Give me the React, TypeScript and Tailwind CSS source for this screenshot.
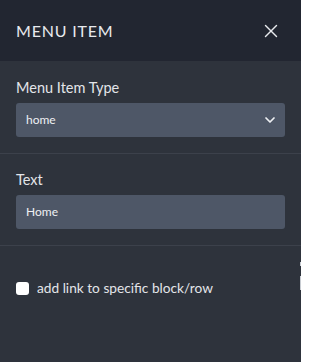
import { X, ChevronDown } from 'lucide-react';

export default function App() {
  return (
    <div className="relative h-[362px] w-[301px] overflow-hidden bg-[#2e333c] font-['Lato',sans-serif] text-[#e5e7eb]">
      <div className="flex h-[61px] items-center justify-between bg-[#222631] pl-4 pr-[19px]">
        <span className="text-[16px] tracking-[0.05em] text-[#e8eaee]">MENU ITEM</span>
        <X size={22} strokeWidth={1.5} className="text-[#e8eaee]" />
      </div>

      <div className="border-b border-[#3c414b] px-4 pb-4 pt-[17px]">
        <label className="block text-[14.5px] leading-5 text-[#e3e5e9]">Menu Item Type</label>
        <div className="mt-[5px] flex h-[34px] items-center justify-between rounded-[3px] bg-[#4e5767] pl-[10px] pr-[7px]">
          <span className="text-[12px] text-[#eef0f3]">home</span>
          <ChevronDown size={16} strokeWidth={2.6} className="text-[#eef0f3]" />
        </div>
      </div>

      <div className="border-b border-[#3c414b] px-4 pb-4 pt-[16px]">
        <label className="block text-[14.5px] leading-5 text-[#e3e5e9]">Text</label>
        <div className="mt-[5px] flex h-[34px] items-center rounded-[3px] bg-[#4e5767] pl-[10px]">
          <span className="text-[12px] text-[#eef0f3]">Home</span>
        </div>
      </div>

      <div className="flex items-center gap-2 px-4 pt-[32px]">
        <span className="h-[13px] w-[13px] rounded-[3px] bg-white" />
        <span className="text-[13.7px] text-[#e3e5e9]">add link to specific block/row</span>
      </div>

      <span className="absolute right-0 top-[262px] h-[4px] w-[1px] bg-[#c8ccd2]" />
      <span className="absolute right-0 top-[276px] h-[14px] w-[1px] bg-[#c8ccd2]" />
    </div>
  );
}
